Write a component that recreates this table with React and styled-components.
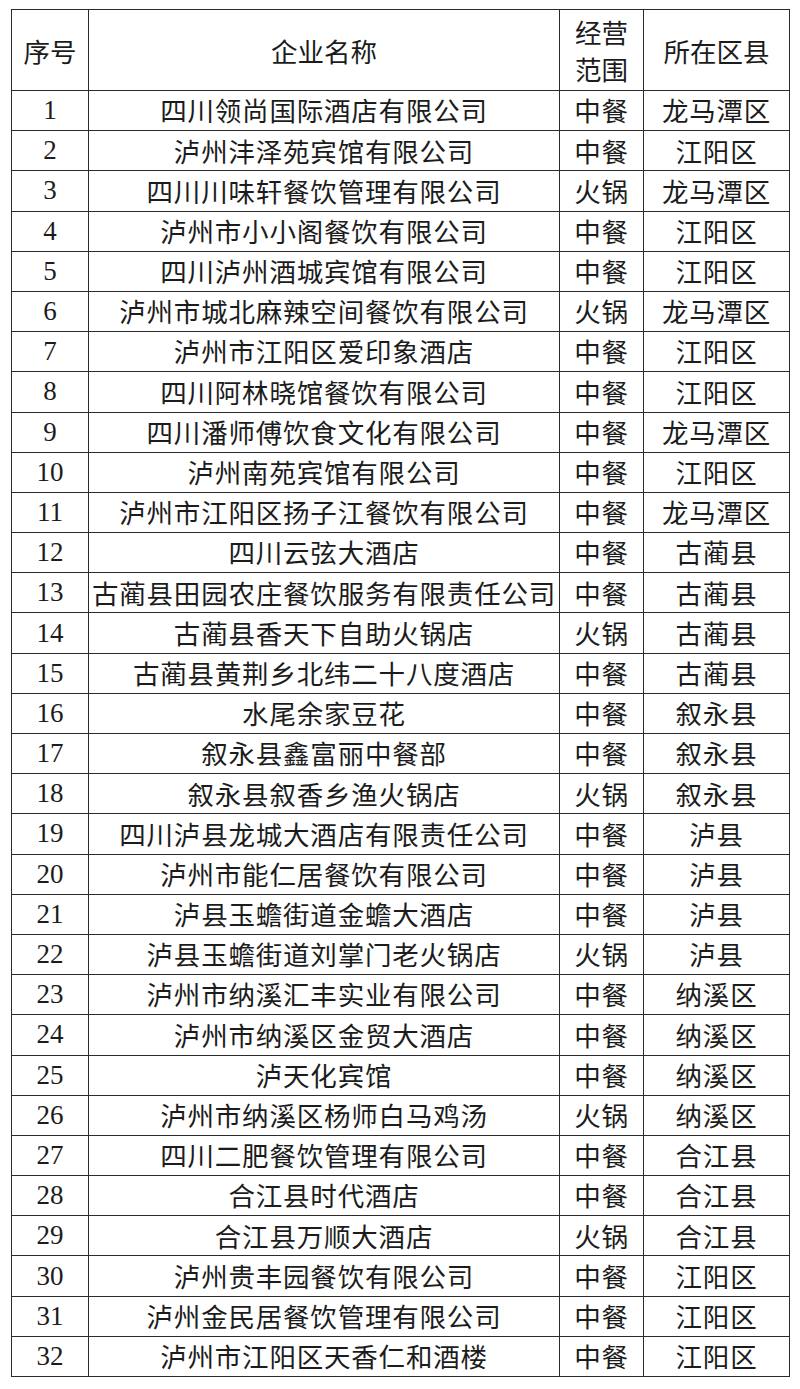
import React from 'react';
import styled, { createGlobalStyle } from 'styled-components';

const GlobalStyle = createGlobalStyle`
  html, body {
    margin: 0;
    padding: 0;
    background: #ffffff;
  }
  body {
    font-family: "Noto Sans CJK SC", "Noto Sans", sans-serif;
    color: #1c1c1c;
  }
`;

const Page = styled.div`
  padding: 9px 0 0 11px;
  width: 800px;
  box-sizing: border-box;
`;

const Table = styled.table`
  border-collapse: collapse;
  table-layout: fixed;
  width: 778px;
  border: 1.5px solid #2a2a2a;
`;

const Head = styled.th`
  border: 1.5px solid #2a2a2a;
  font-weight: 400;
  font-size: 26.5px;
  line-height: 37px;
  height: 80px;
  padding: 0;
  text-align: center;
  vertical-align: middle;
  color: #1c1c1c;
`;

const Row = styled.tr`
  height: 40.2px;
`;

const Cell = styled.td`
  border: 1.5px solid #2a2a2a;
  padding: 0;
  text-align: center;
  vertical-align: middle;
  white-space: nowrap;
  overflow: hidden;
  font-size: ${(p) => (p.$tight ? '25.2px' : '26.5px')};
  line-height: 1;
  letter-spacing: ${(p) => (p.$tight ? '0.3px' : '0.8px')};
`;

const Num = styled(Cell)`
  font-family: "Liberation Serif", "Times New Roman", serif;
  font-size: 27px;
  letter-spacing: 0;
`;

const rows = [
  ['四川领尚国际酒店有限公司', '中餐', '龙马潭区'],
  ['泸州沣泽苑宾馆有限公司', '中餐', '江阳区'],
  ['四川川味轩餐饮管理有限公司', '火锅', '龙马潭区'],
  ['泸州市小小阁餐饮有限公司', '中餐', '江阳区'],
  ['四川泸州酒城宾馆有限公司', '中餐', '江阳区'],
  ['泸州市城北麻辣空间餐饮有限公司', '火锅', '龙马潭区'],
  ['泸州市江阳区爱印象酒店', '中餐', '江阳区'],
  ['四川阿林晓馆餐饮有限公司', '中餐', '江阳区'],
  ['四川潘师傅饮食文化有限公司', '中餐', '龙马潭区'],
  ['泸州南苑宾馆有限公司', '中餐', '江阳区'],
  ['泸州市江阳区扬子江餐饮有限公司', '中餐', '龙马潭区'],
  ['四川云弦大酒店', '中餐', '古蔺县'],
  ['古蔺县田园农庄餐饮服务有限责任公司', '中餐', '古蔺县'],
  ['古蔺县香天下自助火锅店', '火锅', '古蔺县'],
  ['古蔺县黄荆乡北纬二十八度酒店', '中餐', '古蔺县'],
  ['水尾余家豆花', '中餐', '叙永县'],
  ['叙永县鑫富丽中餐部', '中餐', '叙永县'],
  ['叙永县叙香乡渔火锅店', '火锅', '叙永县'],
  ['四川泸县龙城大酒店有限责任公司', '中餐', '泸县'],
  ['泸州市能仁居餐饮有限公司', '中餐', '泸县'],
  ['泸县玉蟾街道金蟾大酒店', '中餐', '泸县'],
  ['泸县玉蟾街道刘掌门老火锅店', '火锅', '泸县'],
  ['泸州市纳溪汇丰实业有限公司', '中餐', '纳溪区'],
  ['泸州市纳溪区金贸大酒店', '中餐', '纳溪区'],
  ['泸天化宾馆', '中餐', '纳溪区'],
  ['泸州市纳溪区杨师白马鸡汤', '火锅', '纳溪区'],
  ['四川二肥餐饮管理有限公司', '中餐', '合江县'],
  ['合江县时代酒店', '中餐', '合江县'],
  ['合江县万顺大酒店', '火锅', '合江县'],
  ['泸州贵丰园餐饮有限公司', '中餐', '江阳区'],
  ['泸州金民居餐饮管理有限公司', '中餐', '江阳区'],
  ['泸州市江阳区天香仁和酒楼', '中餐', '江阳区'],
];

export default function App() {
  return (
    <>
      <GlobalStyle />
      <Page>
        <Table>
          <colgroup>
            <col style={{ width: 77 }} />
            <col style={{ width: 471 }} />
            <col style={{ width: 84 }} />
            <col style={{ width: 146 }} />
          </colgroup>
          <thead>
            <tr>
              <Head>序号</Head>
              <Head>企业名称</Head>
              <Head>经营<br />范围</Head>
              <Head>所在区县</Head>
            </tr>
          </thead>
          <tbody>
            {rows.map((r, i) => (
              <Row key={i}>
                <Num>{i + 1}</Num>
                <Cell $tight={r[0].length > 17}>{r[0]}</Cell>
                <Cell>{r[1]}</Cell>
                <Cell>{r[2]}</Cell>
              </Row>
            ))}
          </tbody>
        </Table>
      </Page>
    </>
  );
}
